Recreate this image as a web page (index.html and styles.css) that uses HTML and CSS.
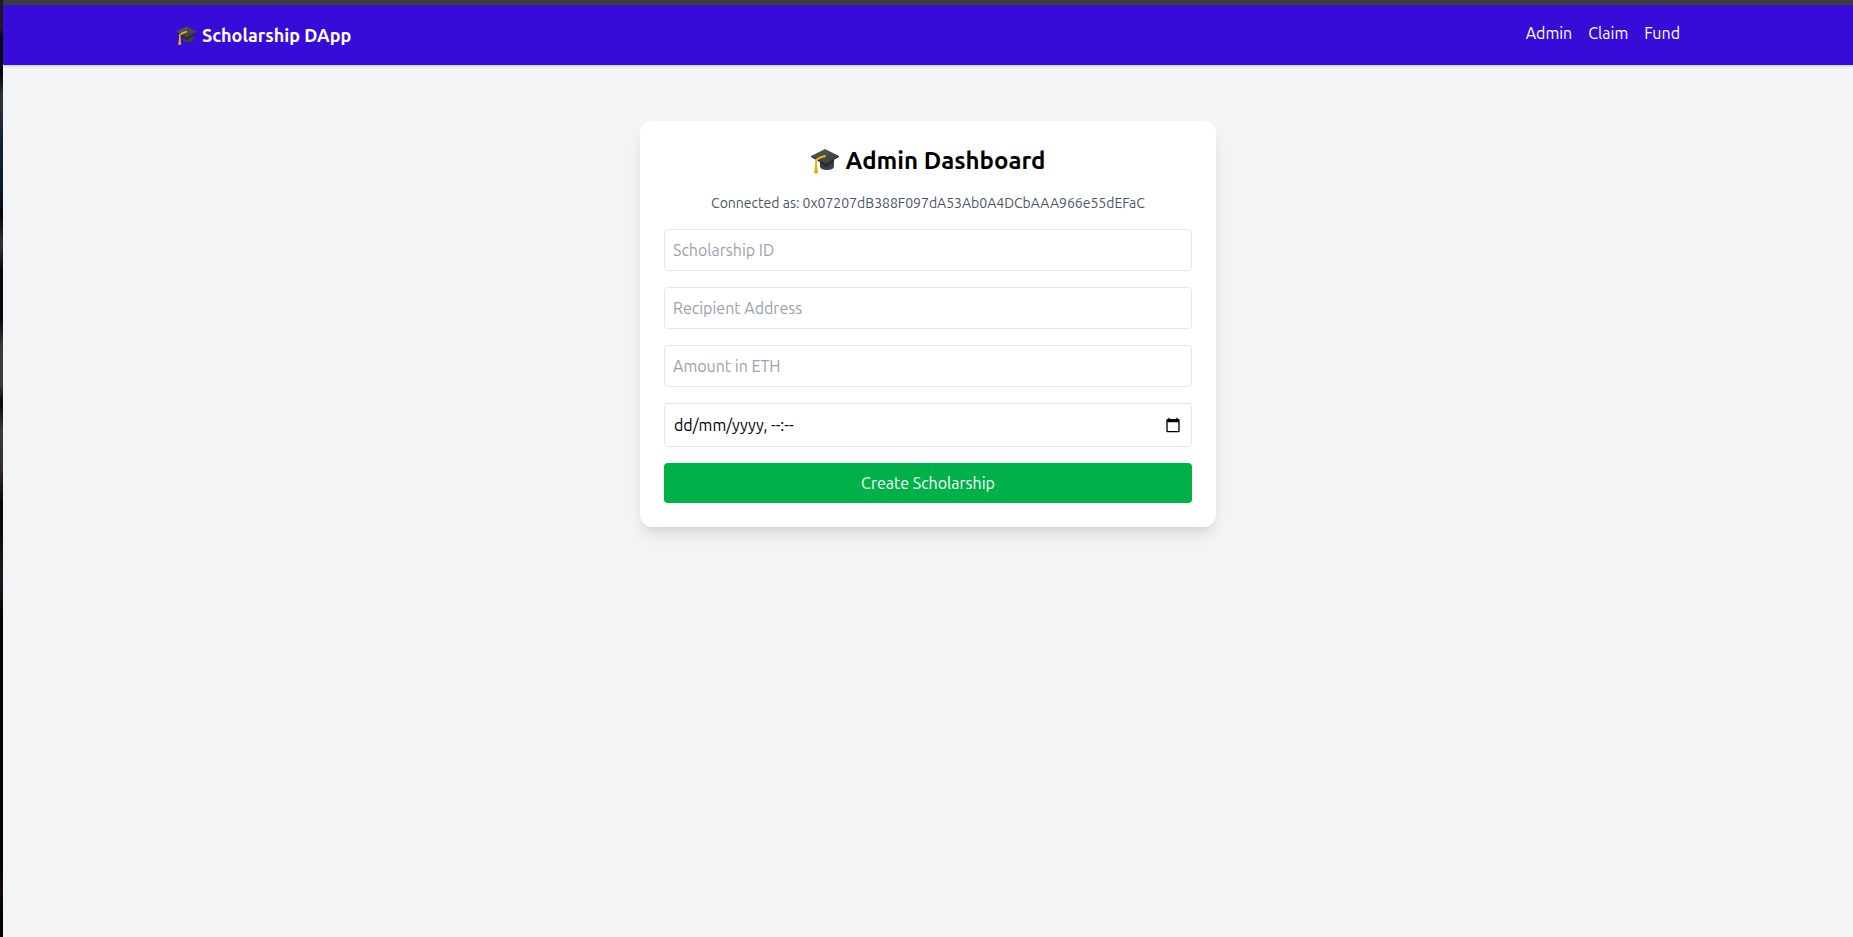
FILE: index.html
```html
<!DOCTYPE html>
<html lang="en-GB">
<head>
<meta charset="utf-8">
<title>Scholarship DApp</title>
<link rel="stylesheet" href="styles.css">
</head>
<body>
<svg class="sprite" aria-hidden="true">
  <defs>
    <linearGradient id="board" x1="0" y1="0" x2="1" y2="1"><stop offset="0" stop-color="#5a5d5c"/><stop offset="1" stop-color="#353838"/></linearGradient>
  </defs>
  <symbol id="cap" viewBox="0 0 28 28">
    <path d="M9 13v7q1 3 7 3 7 0 7-4v-7z" fill="#3c3f3f"/>
    <path d="M9 14v2l6 4 8-6v-2z" fill="#242727"/>
    <path d="M0 9v1l14 8L28 10V9z" fill="#272a2a"/>
    <path d="M0 9 14 2l14 7-13 8z" fill="url(#board)"/>
    <path d="M14 9Q6 11 5 14v6" fill="none" stroke="#f5b70d" stroke-width="2" stroke-linecap="round"/>
    <path d="M4 18h2l1 8q-2 1-4 0z" fill="#f0ac0b"/>
  </symbol>
</svg>
<header class="navbar">
  <div class="container">
    <a class="brand" href="#"><svg class="cap" aria-hidden="true"><use href="#cap"/></svg>Scholarship DApp</a>
    <nav class="links">
      <a href="#admin">Admin</a>
      <a href="#claim">Claim</a>
      <a href="#fund">Fund</a>
    </nav>
  </div>
</header>
<main class="page">
  <form class="card">
    <h1 class="title"><svg class="cap" aria-hidden="true"><use href="#cap"/></svg>Admin Dashboard</h1>
    <p class="account">Connected as: 0x07207dB388F097dA53Ab0A4DCbAAA966e55dEFaC</p>
    <input class="field" type="text" aria-label="Scholarship ID" placeholder="Scholarship ID">
    <input class="field" type="text" aria-label="Recipient Address" placeholder="Recipient Address">
    <input class="field" type="text" aria-label="Amount in ETH" placeholder="Amount in ETH">
    <div class="field date">
      <input class="date-input" type="text" aria-label="Deadline" placeholder="dd/mm/yyyy, --:--">
      <button class="picker" type="button" aria-label="Open calendar">
        <svg viewBox="0 0 24 24" aria-hidden="true"><path d="M20 3h-1V1h-2v2H7V1H5v2H4c-1.100 0-2 .9-2 2v16c0 1.100.9 2 2 2h16c1.100 0 2-.9 2-2V5c0-1.100-.9-2-2-2zm0 18H4V8h16v13z"/></svg>
      </button>
    </div>
    <button class="submit" type="button">Create Scholarship</button>
  </form>
</main>
</body>
</html>
```
FILE: styles.css
```css
*, *::before, *::after { box-sizing: border-box; }
html {
  background: linear-gradient(#1c1c1c 3%, #05070a 4%, #05080c 8%, #2a3036 10%, #2a3036 12%, #0c2438 15%, #0a1c2c 20%, #05070a 23%, #30343a 26%, #05070a 29%, #05070a 34%, #3a3a3c 37%, #3a3a3c 41%, #08080a 43%, #3a3a3c 46%, #362a2c 50%, #050506 54%, #1c1c20 62%, #000 66%, #000 92%, #160c06 95%, #000 98%);
}
body {
  margin: 0 0 0 3px;
  min-height: 100vh;
  border-top: 5px solid #3c3c3c;
  background: #f3f4f6;
  color: #000;
  font: 16px/24px "Ubuntu", "Noto Sans", sans-serif;
}
.sprite { position: absolute; width: 0; height: 0; }
a { color: inherit; text-decoration: none; }
input, button { font: inherit; color: inherit; margin: 0; }

.navbar {
  background: #370cd9;
  color: #fff;
  box-shadow: 0 1px 3px rgba(0, 0, 0, .1), 0 1px 2px rgba(0, 0, 0, .1);
}
.container {
  display: flex;
  justify-content: space-between;
  max-width: 1536px;
  margin: 0 auto;
  padding: 16px;
}
.brand {
  display: flex;
  align-items: center;
  gap: 5px;
  font-size: 18px;
  line-height: 28px;
  font-weight: 700;
}
.brand .cap { width: 21px; height: 21px; }
.links { display: flex; gap: 16px; }

.page { padding: 56px 16px; }
.card {
  display: flex;
  flex-direction: column;
  gap: 16px;
  max-width: 576px;
  margin: 0 auto;
  padding: 24px;
  border-radius: 12px;
  background: #fff;
  box-shadow: 0 10px 15px -3px rgba(0, 0, 0, .1), 0 4px 6px -4px rgba(0, 0, 0, .1);
}
.title {
  display: flex;
  justify-content: center;
  align-items: center;
  gap: 7px;
  margin: 0;
  font-size: 24px;
  line-height: 32px;
  font-weight: 700;
}
.title .cap { width: 28px; height: 28px; }
.account {
  margin: 0;
  text-align: center;
  font-size: 14px;
  line-height: 20px;
  color: #4a5565;
}
.field {
  width: 100%;
  padding: 8px;
  border: 1px solid #e5e7eb;
  border-radius: 4px;
  background: #fff;
}
.field::placeholder { color: #99a1af; opacity: 1; }
.date { display: flex; align-items: center; padding: 9px; }
.date-input { flex: 1; min-width: 0; padding: 0; border: 0; background: none; }
.date-input::placeholder { color: #000; opacity: 1; }
.picker { display: flex; padding: 0 1px; border: 0; background: none; }
.picker svg { width: 16px; height: 16px; }
.submit {
  padding: 8px;
  border: 0;
  border-radius: 4px;
  background: #00b149;
  color: #fff;
}
```
